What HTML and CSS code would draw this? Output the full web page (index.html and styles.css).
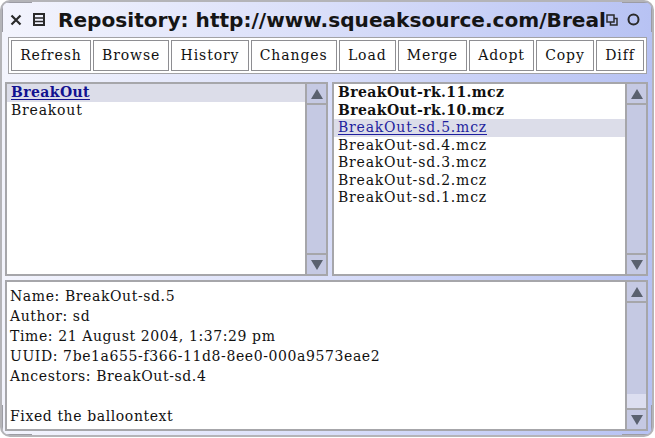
FILE: index.html
```html
<!DOCTYPE html>
<html>
<head>
<meta charset="utf-8">
<link rel="stylesheet" href="styles.css">
</head>
<body>
<div class="window">
  <span class="grip grip-tl-h"></span><span class="grip grip-tl-v"></span>
  <span class="grip grip-tr-h"></span><span class="grip grip-tr-v"></span>
  <span class="grip grip-bl-h"></span><span class="grip grip-bl-v"></span>
  <span class="grip grip-br-h"></span><span class="grip grip-br-v"></span>
  <div class="titlebar">
    <svg class="ico ico-close" width="12" height="12" viewBox="0 0 12 12"><path d="M1.5 1.5 L10.5 10.5 M10.5 1.5 L1.5 10.5" stroke="#2a2a2a" stroke-width="2.2" fill="none"/></svg>
    <svg class="ico ico-menu" width="12" height="13" viewBox="0 0 12 13"><rect x="1" y="1" width="10" height="11" stroke="#2a2a2a" stroke-width="2" fill="none"/><path d="M1 5 H11 M1 8.5 H11" stroke="#2a2a2a" stroke-width="1.6"/></svg>
    <div class="title">Repository: http://www.squeaksource.com/Breal</div>
    <svg class="ico ico-collapse" width="12" height="12" viewBox="0 0 12 12"><rect x="1" y="1" width="7" height="7" stroke="#2a2a2a" stroke-width="1.5" fill="none"/><path d="M4.5 8 V11 H11 V4.5 H8" stroke="#2a2a2a" stroke-width="1.5" fill="none"/></svg>
    <svg class="ico ico-expand" width="13" height="13" viewBox="0 0 13 13"><circle cx="6.5" cy="6.5" r="5" stroke="#2a2a2a" stroke-width="2" fill="none"/></svg>
  </div>
  <div class="buttonbar">
    <div class="btn">Refresh</div>
    <div class="btn">Browse</div>
    <div class="btn">History</div>
    <div class="btn">Changes</div>
    <div class="btn">Load</div>
    <div class="btn">Merge</div>
    <div class="btn">Adopt</div>
    <div class="btn">Copy</div>
    <div class="btn">Diff</div>
  </div>
  <div class="toppanes">
    <div class="pane pane-left">
      <div class="list">
        <div class="row sel bold">BreakOut</div>
        <div class="row">Breakout</div>
      </div>
      <div class="sb">
        <div class="sbbtn"><span class="arrow up"></span></div>
        <div class="track"></div>
        <div class="sbbtn down-btn"><span class="arrow down"></span></div>
      </div>
    </div>
    <div class="pane pane-right">
      <div class="list">
        <div class="row bold">BreakOut-rk.11.mcz</div>
        <div class="row bold">BreakOut-rk.10.mcz</div>
        <div class="row sel">BreakOut-sd.5.mcz</div>
        <div class="row">BreakOut-sd.4.mcz</div>
        <div class="row">BreakOut-sd.3.mcz</div>
        <div class="row">BreakOut-sd.2.mcz</div>
        <div class="row">BreakOut-sd.1.mcz</div>
      </div>
      <div class="sb">
        <div class="sbbtn"><span class="arrow up"></span></div>
        <div class="track"></div>
        <div class="sbbtn down-btn"><span class="arrow down"></span></div>
      </div>
    </div>
  </div>
  <div class="pane pane-bottom">
    <div class="text">
      <div class="line">Name: BreakOut-sd.5</div>
      <div class="line">Author: sd</div>
      <div class="line">Time: 21 August 2004, 1:37:29 pm</div>
      <div class="line">UUID: 7be1a655-f366-11d8-8ee0-000a9573eae2</div>
      <div class="line">Ancestors: BreakOut-sd.4</div>
      <div class="line blank"></div>
      <div class="line">Fixed the balloontext</div>
    </div>
    <div class="sb">
      <div class="sbbtn"><span class="arrow up"></span></div>
      <div class="track"></div>
      <div class="thumb"></div>
      <div class="sbbtn down-btn"><span class="arrow down"></span></div>
    </div>
  </div>
</div>
</body>
</html>
```
FILE: styles.css
```css
* { box-sizing: border-box; }
html, body { margin: 0; padding: 0; background: #ffffff; }
body { width: 655px; height: 438px; overflow: hidden; }

.window {
  position: relative;
  width: 654px;
  height: 437px;
  border: 2px solid #b4b4b8;
  border-radius: 10px;
  background: linear-gradient(to right, #f3f4fd 0%, #d9def9 50%, #b7c2f3 100%);
  padding: 0 4px 0 3px;
  display: flex;
  flex-direction: column;
  overflow: hidden;
}

.grip { position: absolute; background: #9c9ca4; }
.grip-tl-h { left: 0; top: -2px; width: 30px; height: 3px; }
.grip-tl-v { left: -2px; top: 0; width: 3px; height: 30px; }
.grip-tr-h { right: 0; top: -2px; width: 30px; height: 3px; }
.grip-tr-v { right: -2px; top: 0; width: 3px; height: 30px; }
.grip-bl-h { left: 0; bottom: -2px; width: 30px; height: 3px; }
.grip-bl-v { left: -2px; bottom: 0; width: 3px; height: 30px; }
.grip-br-h { right: 0; bottom: -2px; width: 30px; height: 3px; }
.grip-br-v { right: -2px; bottom: 0; width: 3px; height: 30px; }

.titlebar {
  height: 35px;
  display: flex;
  align-items: center;
  padding-left: 5px;
  padding-right: 8px;
  flex: none;
}
.ico { flex: none; display: block; }
.ico-close { margin-top: 1px; }
.ico-menu { margin-left: 11px; }
.title {
  flex: 1;
  margin-left: 13px;
  white-space: nowrap;
  font-family: "DejaVu Sans", sans-serif;
  font-weight: bold;
  font-size: 20.1px;
  color: #151515;
}
.ico-expand { margin-left: 9px; }

.buttonbar {
  flex: none;
  margin: 0 1px 0 3px;
  height: 37px;
  border: 1px solid #a2a2a6;
  background: #ffffff;
  padding: 2px;
  display: flex;
  gap: 2px;
}
.btn {
  flex: 1 1 auto;
  border: 1.5px solid #8e8e92;
  background: #ffffff;
  display: flex;
  align-items: center;
  justify-content: center;
  font-family: "DejaVu Serif", serif;
  font-size: 14px;
  letter-spacing: 0.9px;
  color: #111;
  padding: 0 6px 1px;
}

.toppanes {
  flex: none;
  margin-top: 8px;
  height: 194px;
  display: flex;
  gap: 4px;
}
.pane {
  border: 2px solid #a6a6aa;
  background: #ffffff;
  display: flex;
}
.pane-left { width: 323px; }
.pane-right { flex: 1; }
.pane-bottom { margin-top: 4px; height: 151px; }

.list, .text {
  flex: 1;
  padding: 0 0 0 4px;
  font-family: "DejaVu Serif", serif;
  font-size: 14px;
  letter-spacing: 0.8px;
  color: #111;
}
.row { height: 17.5px; line-height: 17.5px; white-space: nowrap; margin-left: -4px; padding-left: 4px; }
.row.bold { font-weight: bold; letter-spacing: 0.4px; }
.row.sel { background: #dcdde9; color: #1f1f9e; text-decoration: underline; text-underline-offset: 2px; }
.row.sel.bold { color: #121290; }

.text { padding: 4px 0 0 3px; letter-spacing: 0.6px; }
.line { height: 20px; line-height: 20px; white-space: nowrap; }

.sb {
  width: 21px;
  flex: none;
  border-left: 2px solid #a6a6aa;
  background: #c5c9e3;
  display: flex;
  flex-direction: column;
}
.sbbtn {
  height: 21px;
  flex: none;
  border-bottom: 2px solid #a6a6aa;
  display: flex;
  align-items: center;
  justify-content: center;
  background: #c5c9e3;
}
.sbbtn.down-btn { border-bottom: none; border-top: 2px solid #a6a6aa; }
.track { flex: 1; background: #c5c9e3; }
.thumb { height: 14px; background: #dcdef0; flex: none; }
.arrow { width: 0; height: 0; border-left: 6px solid transparent; border-right: 6px solid transparent; }
.arrow.up { border-bottom: 10px solid #5a616f; }
.arrow.down { border-top: 10px solid #5a616f; }
```
